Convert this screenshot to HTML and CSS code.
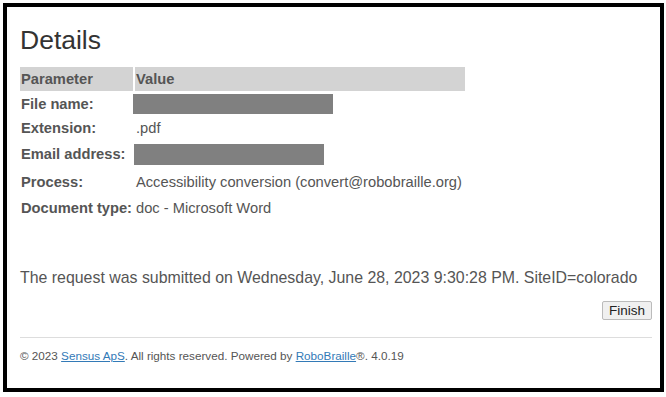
FILE: index.html
```html
<!DOCTYPE html>
<html>
<head>
<meta charset="utf-8">
<link rel="stylesheet" href="styles.css">
</head>
<body>
<div class="frame">
  <h2 class="title">Details</h2>
  <table class="details">
    <tr class="row-head"><th>Parameter</th><th class="col-value">Value</th></tr>
    <tr class="row-s"><td class="label">File name:</td><td><span class="redact redact-file"></span></td></tr>
    <tr class="row-s"><td class="label">Extension:</td><td>.pdf</td></tr>
    <tr class="row-l"><td class="label">Email address:</td><td><span class="redact redact-email"></span></td></tr>
    <tr class="row-l"><td class="label">Process:</td><td>Accessibility conversion (convert@robobraille.org)</td></tr>
    <tr class="row-s"><td class="label">Document type:</td><td>doc - Microsoft Word</td></tr>
  </table>
  <p class="submitted">The request was submitted on Wednesday, June 28, 2023 9:30:28 PM. SiteID=colorado</p>
  <div class="actions"><button class="finish">Finish</button></div>
  <hr class="rule">
  <p class="copy">© 2023 <a href="#">Sensus ApS</a>. All rights reserved. Powered by <a href="#">RoboBraille</a>®. 4.0.19</p>
</div>
</body>
</html>
```
FILE: styles.css
```css
html, body {
  margin: 0;
  padding: 0;
  background: #fff;
}
body {
  font-family: "Liberation Sans", Arial, sans-serif;
  color: #555;
}
.frame {
  margin: 3px 2px 5px 3px;
  height: 381px;
  border: 4px solid #000;
  padding: 0 8px 0 13px;
  box-sizing: content-box;
}
.title {
  margin: 0;
  padding-top: 15px;
  font-size: 26.5px;
  font-weight: normal;
  line-height: 36px;
  color: #333;
}
.details {
  margin-top: 7px;
  margin-left: -2px;
  border-collapse: separate;
  border-spacing: 2px;
  font-size: 14.7px;
  white-space: nowrap;
}
.details th {
  background: #d3d3d3;
  text-align: left;
  font-weight: bold;
  padding: 0 1px;
  color: #555;
}
.row-head { height: 24px; }
.row-s { height: 22px; }
.row-l { height: 26px; }
.col-value { width: 328px; }
.details td {
  padding: 0 1px;
}
.label {
  font-weight: bold;
  color: #555;
}
.redact {
  display: block;
  background: #808080;
  height: 20px;
  margin-left: -3px;
}
.redact-file { width: 200px; }
.redact-email { width: 190px; height: 21px; margin-left: -2px; }
.submitted {
  margin: 48px 0 0 0;
  font-size: 15.9px;
  line-height: 18px;
}
.actions {
  display: flex;
  justify-content: flex-end;
  margin-top: 14px;
}
.finish {
  font-family: "Liberation Sans", Arial, sans-serif;
  font-size: 13.5px;
  line-height: 16px;
  color: #222;
  background: #f0f0f0;
  border: 1px solid #bbb;
  border-radius: 2px;
  padding: 0 6px;
  height: 19px;
}
.rule {
  margin: 17px 0 0 0;
  border: 0;
  border-top: 1px solid #ddd;
}
.copy {
  margin: 11px 0 0 0;
  font-size: 11.7px;
  line-height: 14px;
  color: #555;
}
.copy a {
  color: #337ab7;
}
```
